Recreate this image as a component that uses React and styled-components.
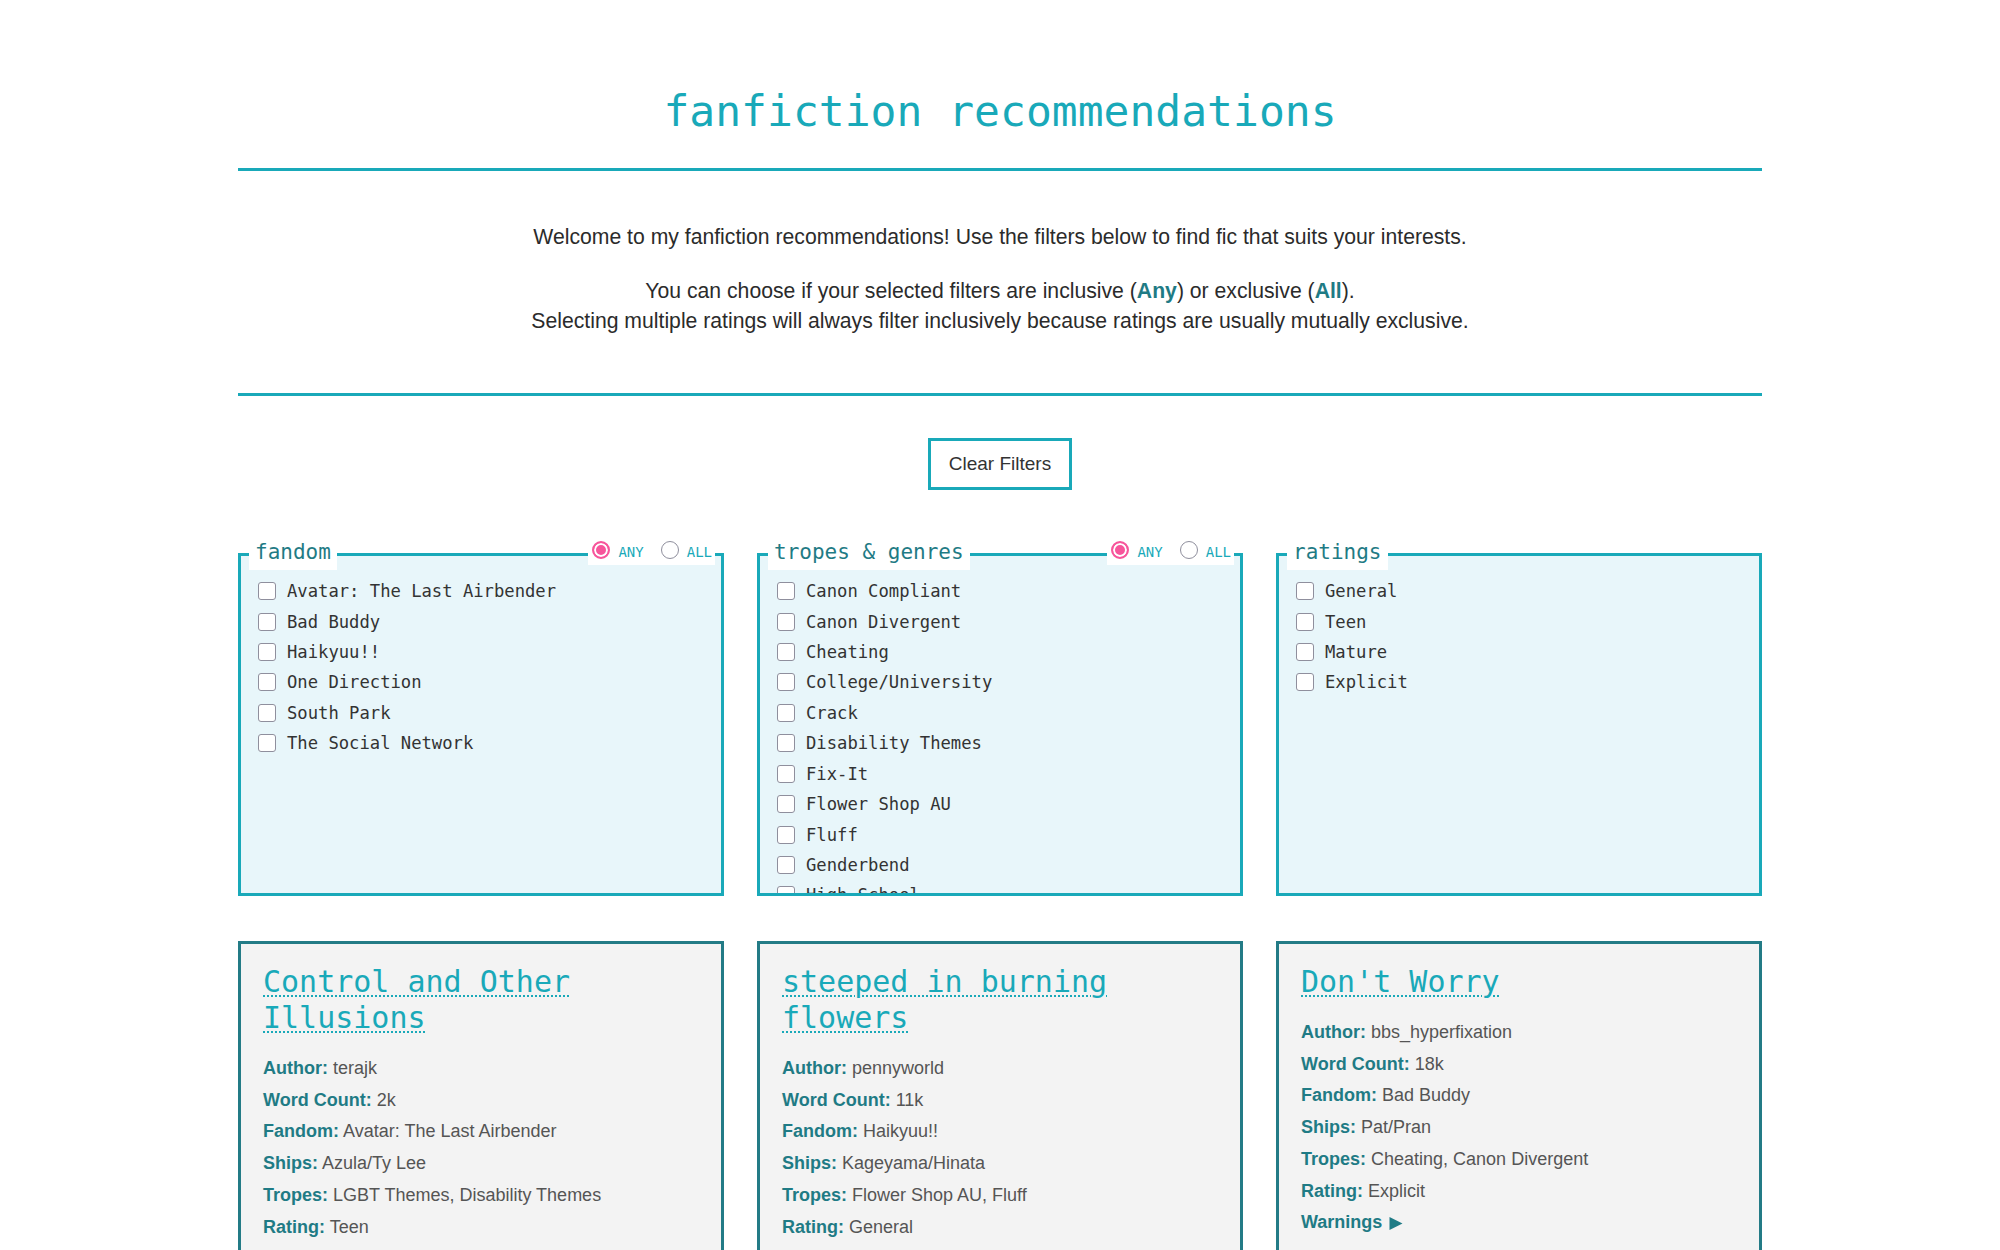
import React from 'react';
import styled, { createGlobalStyle } from 'styled-components';

const MONO = `"DejaVu Sans Mono", "Liberation Mono", monospace`;
const SANS = `"Liberation Sans", Arial, Helvetica, sans-serif`;
const CYAN = '#19a9b9';
const TEAL = '#1f7b85';
const PINK = '#f7559b';

const GlobalStyle = createGlobalStyle`
  html, body { margin: 0; padding: 0; background: #ffffff; }
  body {
    font-family: ${SANS};
    font-size: 21px;
    color: #2b2b2b;
  }
  * { box-sizing: border-box; }
`;

const Page = styled.main`
  width: 1524px;
  margin: 0 auto;
  padding: 86px 0 60px;
`;

const Title = styled.h1`
  margin: 0;
  font-family: ${MONO};
  font-size: 43px;
  font-weight: normal;
  line-height: 50px;
  text-align: center;
  color: ${CYAN};
`;

const Rule = styled.hr`
  margin: ${(p) => p.$top}px 0 0;
  border: none;
  height: 3px;
  background: ${CYAN};
`;

const Intro = styled.section`
  padding-top: 51px;
  text-align: center;
  font-size: 21.2px;
  line-height: 30px;
  color: #2b2b2b;
`;

const Para = styled.p`
  margin: 0;
  & + & { margin-top: 24px; }
`;

const Em = styled.strong`
  color: ${TEAL};
  font-weight: bold;
`;

const ClearButton = styled.button`
  display: block;
  margin: 42px auto 0;
  height: 52px;
  padding: 0 18px;
  border: 3px solid ${CYAN};
  background: #ffffff;
  color: #333333;
  font-family: ${SANS};
  font-size: 19px;
  cursor: pointer;
`;

const FilterGrid = styled.div`
  display: grid;
  grid-template-columns: repeat(3, 1fr);
  gap: 33px;
  margin-top: 63px;
`;

const FilterBox = styled.section`
  display: flex;
  flex-direction: column;
  height: 343px;
  border: 3px solid ${CYAN};
  background: #e8f6fa;
`;

const BoxHeader = styled.div`
  display: flex;
  justify-content: space-between;
  align-items: flex-start;
  margin-top: -16.5px;
  padding: 0 6px 0 8px;
  flex-shrink: 0;
`;

const Legend = styled.h2`
  margin: 0;
  height: 30px;
  padding: 0 6px 6px;
  line-height: 24px;
  background: #ffffff;
  font-family: ${MONO};
  font-size: 21px;
  font-weight: normal;
  color: ${TEAL};
`;

const ModeGroup = styled.div`
  display: flex;
  align-items: center;
  height: 30px;
  margin-top: -4.5px;
  padding: 0 3px 0 4px;
  background: #ffffff;
`;

const ModeOption = styled.label`
  display: flex;
  align-items: center;
  gap: 8px;
  font-family: ${MONO};
  font-size: 14px;
  line-height: 18px;
  color: ${CYAN};
  & + & { margin-left: 17px; }
`;

const ModeText = styled.span`
  padding-top: 3px;
`;

const Radio = styled.input.attrs({ type: 'radio' })`
  appearance: none;
  margin: 0;
  width: 18px;
  height: 18px;
  border-radius: 50%;
  border: 1.5px solid #8f8f9d;
  background: #ffffff;
  &:checked {
    border: 2px solid ${PINK};
    background: ${PINK};
    box-shadow: inset 0 0 0 2px #ffffff;
  }
`;

const OptionList = styled.ul`
  list-style: none;
  margin: 0;
  padding: 6.5px 0 0 17px;
  flex: 1;
  min-height: 0;
  overflow-y: auto;
  scrollbar-width: none;
  &::-webkit-scrollbar { display: none; }
`;

const OptionItem = styled.li`
  display: flex;
  align-items: center;
  gap: 11px;
  height: 30.43px;
  font-family: ${MONO};
  font-size: 17.2px;
  color: #333333;
  white-space: nowrap;
`;

const Check = styled.input.attrs({ type: 'checkbox' })`
  appearance: none;
  flex-shrink: 0;
  margin: 0;
  width: 18px;
  height: 18px;
  border: 1.5px solid #8f8f9d;
  border-radius: 3px;
  background: #ffffff;
`;

const CardGrid = styled.div`
  display: grid;
  grid-template-columns: repeat(3, 1fr);
  gap: 33px;
  margin-top: 45px;
`;

const Card = styled.article`
  border: 3px solid #237b86;
  background: #f3f3f3;
  padding: 20px 22px 24px;
`;

const CardTitle = styled.h3`
  margin: 0 0 17px;
  font-family: ${MONO};
  font-size: 30px;
  font-weight: normal;
  line-height: 36px;
`;

const TitleLink = styled.a`
  color: ${CYAN};
  text-decoration: underline dotted;
  text-decoration-thickness: 2px;
  text-underline-offset: 3px;
`;

const Detail = styled.p`
  margin: 0;
  font-size: 18px;
  line-height: 31.7px;
  color: #555555;
`;

const Label = styled.strong`
  color: ${TEAL};
  font-weight: bold;
`;

const Warnings = styled.div`
  display: flex;
  align-items: center;
  gap: 7px;
  font-size: 18px;
  line-height: 31.7px;
  font-weight: bold;
  color: ${TEAL};
`;

const Triangle = () => (
  <svg width="14" height="15" viewBox="0 0 14 15" aria-hidden="true">
    <path d="M0.5 1 L13.5 7.5 L0.5 14 Z" fill={TEAL} />
  </svg>
);

const FANDOMS = [
  'Avatar: The Last Airbender',
  'Bad Buddy',
  'Haikyuu!!',
  'One Direction',
  'South Park',
  'The Social Network',
];

const TROPES = [
  'Canon Compliant',
  'Canon Divergent',
  'Cheating',
  'College/University',
  'Crack',
  'Disability Themes',
  'Fix-It',
  'Flower Shop AU',
  'Fluff',
  'Genderbend',
  'High School',
  'LGBT Themes',
  'Slow Burn',
];

const RATINGS = ['General', 'Teen', 'Mature', 'Explicit'];

const FICS = [
  {
    title: 'Control and Other Illusions',
    author: 'terajk',
    words: '2k',
    fandom: 'Avatar: The Last Airbender',
    ships: 'Azula/Ty Lee',
    tropes: 'LGBT Themes, Disability Themes',
    rating: 'Teen',
  },
  {
    title: 'steeped in burning flowers',
    author: 'pennyworld',
    words: '11k',
    fandom: 'Haikyuu!!',
    ships: 'Kageyama/Hinata',
    tropes: 'Flower Shop AU, Fluff',
    rating: 'General',
  },
  {
    title: "Don't Worry",
    author: 'bbs_hyperfixation',
    words: '18k',
    fandom: 'Bad Buddy',
    ships: 'Pat/Pran',
    tropes: 'Cheating, Canon Divergent',
    rating: 'Explicit',
  },
];

function FilterPanel({ name, items, withMode }) {
  return (
    <FilterBox>
      <BoxHeader>
        <Legend>{name}</Legend>
        {withMode && (
          <ModeGroup>
            <ModeOption>
              <Radio name={`${name}-mode`} defaultChecked />
              <ModeText>ANY</ModeText>
            </ModeOption>
            <ModeOption>
              <Radio name={`${name}-mode`} />
              <ModeText>ALL</ModeText>
            </ModeOption>
          </ModeGroup>
        )}
      </BoxHeader>
      <OptionList>
        {items.map((item) => (
          <OptionItem key={item}>
            <Check />
            {item}
          </OptionItem>
        ))}
      </OptionList>
    </FilterBox>
  );
}

function FicCard({ fic }) {
  return (
    <Card>
      <CardTitle>
        <TitleLink href="#">{fic.title}</TitleLink>
      </CardTitle>
      <Detail><Label>Author:</Label> {fic.author}</Detail>
      <Detail><Label>Word Count:</Label> {fic.words}</Detail>
      <Detail><Label>Fandom:</Label> {fic.fandom}</Detail>
      <Detail><Label>Ships:</Label> {fic.ships}</Detail>
      <Detail><Label>Tropes:</Label> {fic.tropes}</Detail>
      <Detail><Label>Rating:</Label> {fic.rating}</Detail>
      <Warnings>
        Warnings <Triangle />
      </Warnings>
    </Card>
  );
}

export default function App() {
  return (
    <>
      <GlobalStyle />
      <Page>
        <Title>fanfiction recommendations</Title>
        <Rule $top={32} />
        <Intro>
          <Para>
            Welcome to my fanfiction recommendations! Use the filters below to find fic that suits your interests.
          </Para>
          <Para>
            You can choose if your selected filters are inclusive (<Em>Any</Em>) or exclusive (<Em>All</Em>).
            <br />
            Selecting multiple ratings will always filter inclusively because ratings are usually mutually exclusive.
          </Para>
        </Intro>
        <Rule $top={57} />
        <ClearButton type="button">Clear Filters</ClearButton>
        <FilterGrid>
          <FilterPanel name="fandom" items={FANDOMS} withMode />
          <FilterPanel name="tropes & genres" items={TROPES} withMode />
          <FilterPanel name="ratings" items={RATINGS} />
        </FilterGrid>
        <CardGrid>
          {FICS.map((fic) => (
            <FicCard key={fic.title} fic={fic} />
          ))}
        </CardGrid>
      </Page>
    </>
  );
}
